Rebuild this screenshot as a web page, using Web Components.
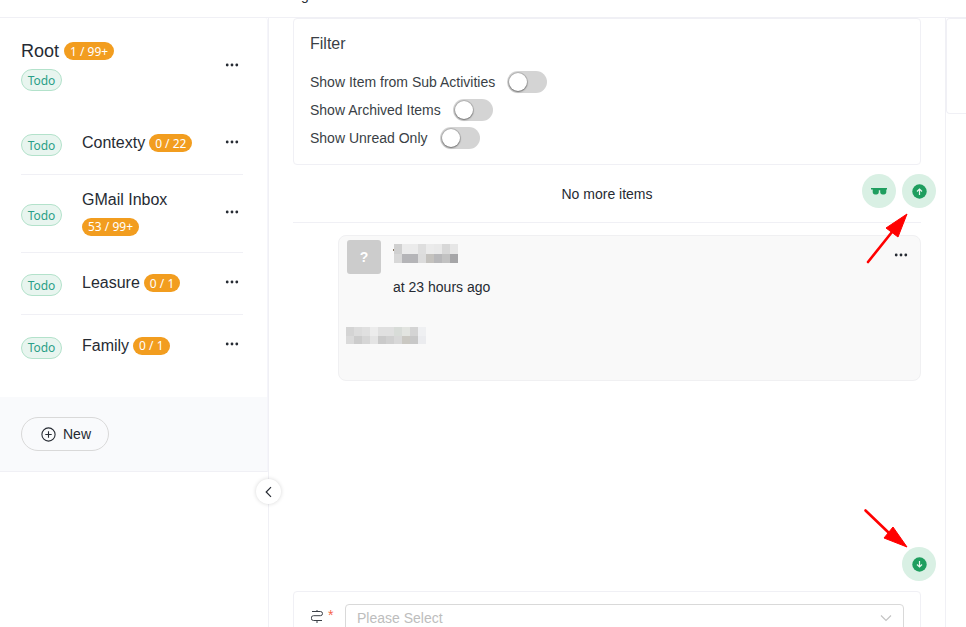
<!DOCTYPE html>
<html><head><meta charset="utf-8"><title>Activity</title>
<style>
html,body{margin:0;padding:0;height:627px;overflow:hidden;background:#fff;font-family:"Liberation Sans",Arial,sans-serif;color:#262b33}
</style></head><body>
<app-shell>
  <top-bar slot="top">g</top-bar>
  <side-panel slot="side">
    <todo-row root title-text="Root" badge="1 / 99+"></todo-row>
    <todo-row title-text="Contexty" badge="0 / 22" sep></todo-row>
    <todo-row wrap title-text="GMail Inbox" badge="53 / 99+" sep></todo-row>
    <todo-row title-text="Leasure" badge="0 / 1" sep></todo-row>
    <todo-row title-text="Family" badge="0 / 1"></todo-row>
  </side-panel>
  <main-pane slot="main">
    <filter-card>
      <toggle-row>Show Item from Sub Activities</toggle-row>
      <toggle-row>Show Archived Items</toggle-row>
      <toggle-row>Show Unread Only</toggle-row>
    </filter-card>
    <list-end>No more items</list-end>
    <message-card></message-card>
    <form-card></form-card>
  </main-pane>
  <right-card slot="right"></right-card>
</app-shell>
<script>
const def=(name,css,html,init)=>{customElements.define(name,class extends HTMLElement{
  connectedCallback(){ if(this.shadowRoot)return; const r=this.attachShadow({mode:'open'});
    r.innerHTML='<style>'+css+'</style>'+(typeof html==='function'?html(this):html); if(init)init(this,r);}
});};
const dots='<svg width="14" height="4" viewBox="0 0 14 4" fill="#262b33"><circle cx="2.2" cy="2" r="1.4"/><circle cx="7" cy="2" r="1.4"/><circle cx="11.8" cy="2" r="1.4"/></svg>';

def('more-dots',':host{display:flex;align-items:center;justify-content:center;width:14px;height:14px}svg{display:block}',dots);
def('status-tag',`:host{display:inline-flex;align-items:center;justify-content:center;box-sizing:border-box;width:41px;height:22px;border:1px solid #b3e2cb;border-radius:11px;background:#e8f5ef;color:#2b9f87;font:12px "Noto Sans",sans-serif;flex:none}`,'<slot>Todo</slot>');
def('count-badge',`:host{display:inline-flex;align-items:center;justify-content:center;box-sizing:border-box;height:18px;padding:0 6px;border-radius:9px;background:#f29d1f;color:#fff;font:12px "Noto Sans",sans-serif;white-space:nowrap;flex:none}`,'<slot></slot>');

def('app-shell',`:host{display:flex;flex-direction:column;width:966px;height:627px;overflow:hidden;position:relative}
.row{display:flex;flex:1;min-height:0}
.left{width:268px;flex:none;border-right:1px solid #f0f0f5;position:relative}
.mid{width:676px;flex:none;border-right:1px solid #f0f0f5;min-height:0}
.right{flex:1;min-width:0}
.collapse{position:absolute;right:-13px;top:461px;width:25px;height:25px;box-sizing:border-box;border-radius:50%;background:#fff;box-shadow:0 0 4px rgba(0,0,0,.16);display:flex;align-items:center;justify-content:center}
svg.ov{position:absolute;left:0;top:0;pointer-events:none}`,
`<slot name="top"></slot><div class="row"><div class="left"><slot name="side"></slot>
<div class="collapse"><svg width="12" height="12" viewBox="0 0 12 12" fill="none" stroke="#262b33" stroke-width="1.2"><path d="M8 1.2 3.2 6 8 10.8"/></svg></div></div>
<div class="mid"><slot name="main"></slot></div><div class="right"><slot name="right"></slot></div></div>
<svg class="ov" width="966" height="627" fill="#f00" stroke="#f00">
<path d="M868 262 892 232" stroke-width="2.6" stroke-linecap="round"/><path d="M907 214 886 228 898 237Z" stroke-width="1"/>
<path d="M865.500 510.500 889 533" stroke-width="2.600" stroke-linecap="round"/><path d="M907 547 884 538 893 527Z" stroke-width="1"/>
</svg>`);

def('top-bar',`:host{display:block;height:17px;border-bottom:1px solid #f0f0f5;overflow:hidden;background:#fff;font-size:14px;color:#262b33}
span{display:block;margin:-13px 0 0 301px;line-height:16px;height:16px}`,'<span><slot></slot></span>');

def('side-panel',`:host{display:flex;flex-direction:column;box-sizing:border-box;height:454px;border-right:1px solid #f5f5fa;border-bottom:1px solid #f0f0f5;border-top-right-radius:3px}
.list{flex:1;padding:0 24px 0 21px}
.foot{height:74px;flex:none;background:#f9fafc;display:flex;align-items:center;padding-left:21px;box-sizing:border-box}
.btn{display:flex;align-items:center;box-sizing:border-box;width:88px;height:34px;border:1px solid #d9d9d9;border-radius:17px;padding-left:19px;gap:7px;font-size:14px;color:#262b33}
svg{display:block}`,
`<div class="list"><slot></slot></div><div class="foot"><div class="btn"><svg width="15" height="15" viewBox="0 0 15 15" fill="none" stroke="#262b33" stroke-width="1.100"><circle cx="7.500" cy="7.500" r="6.600"/><path d="M7.500 4.300v6.400M4.300 7.500h6.400"/></svg>New</div></div>`);

def('todo-row',`:host{display:flex;align-items:center;box-sizing:border-box;height:62px;color:#262b33}
:host([root]){height:95px;padding-top:14px;align-items:flex-start}
:host([wrap]){height:78px}
:host([sep]){border-bottom:1px solid #f0f0f5}
.tag{width:61px;flex:none;display:flex;margin-top:3px}
.body{flex:1;display:flex;align-items:center;gap:4px;font-size:16px;line-height:22px;min-width:0;margin-top:-1px}
:host([wrap]) .body{flex-direction:column;align-items:flex-start;gap:7px;margin-top:-3px}
.dots{margin-right:4px;margin-top:-4px}
:host([wrap]) .dots{margin-top:-4px}
.rootbody{flex:1}
.rt{display:flex;align-items:center;gap:5px;font-size:18px;line-height:24px;margin-top:7px}
.rootbody status-tag{margin-top:6px}
:host([root]) .dots{margin-top:26px}`,
h=>h.hasAttribute('root')
?`<div class="rootbody"><div class="rt">${h.getAttribute('title-text')} <count-badge>${h.getAttribute('badge')}</count-badge></div><status-tag></status-tag></div><div class="dots"><more-dots></more-dots></div>`
:`<div class="tag"><status-tag></status-tag></div><div class="body"><span>${h.getAttribute('title-text')}</span><count-badge>${h.getAttribute('badge')}</count-badge></div><div class="dots"><more-dots></more-dots></div>`);

def('main-pane',`:host{display:flex;flex-direction:column;height:100%;padding:0 24px;box-sizing:border-box;overflow:visible;width:676px}`,'<slot></slot>');
def('filter-card',`:host{display:block;box-sizing:border-box;height:147px;border:1px solid #f0f0f5;border-radius:4px;padding:16px 16px 0;color:#3a3f46;flex:none}
h3{margin:0 0 15px;font-size:16px;font-weight:400;line-height:18px;color:#3a3f46}`,'<h3>Filter</h3><slot></slot>');
def('toggle-row',`:host{display:flex;align-items:center;gap:12px;height:28px;font-size:14px;color:#3a3f46}
.t{width:40px;height:22px;border-radius:11px;background:#d4d4d4;position:relative;flex:none}
.t::after{content:"";position:absolute;left:2px;top:2px;width:18px;height:18px;border-radius:50%;background:#fff;box-shadow:0 0 0 1px rgba(0,0,0,.14),0 1px 2px rgba(0,0,0,.4)}`,
'<span><slot></slot></span><div class="t"></div>');

def('round-btn',`:host{display:flex;align-items:center;justify-content:center;width:34px;height:34px;border-radius:50%;background:#d9f0e4}svg{display:block}`,
h=>h.getAttribute('kind')==='glasses'
?'<svg width="16" height="7" viewBox="0 0 16 7" fill="#1f9e5f"><path d="M0 0h16v1.500h-.7V4c0 1.500-.9 2.500-2.300 2.500h-1.500c-1.400 0-2.300-1-2.300-2.500V2.200H7.800V4c0 1.500-.9 2.500-2.300 2.500H4C2.600 6.500 1.700 5.500 1.700 4V1.500H0z"/></svg>'
:`<svg width="15" height="15" viewBox="0 0 15 15"><circle cx="7.500" cy="7.500" r="7.200" fill="#1f9e5f"/><path d="${h.getAttribute('kind')==='up'?'M7.500 11V6M5 7.500 7.500 5 10 7.500':'M7.500 4V9M5 7.500 7.500 10 10 7.500'}" fill="none" stroke="#e9f7f0" stroke-width="1.200"/></svg>`);
def('list-end',`:host{display:flex;align-items:center;justify-content:center;flex:none;height:57px;border-bottom:1px solid #f0f0f5;font-size:14px;color:#262b33;position:relative}
.b{position:absolute;right:-15px;top:9px;display:flex;gap:6px}`,
'<slot></slot><div class="b"><round-btn kind="glasses"></round-btn><round-btn kind="up"></round-btn></div>');

const px=(cols,cells,w,h)=>`<div style="display:grid;grid-template-columns:repeat(${cols},${w}px);grid-auto-rows:${h}px">`+cells.map(c=>`<i style="display:block;background:${c}"></i>`).join('')+'</div>';
def('message-card',`:host{display:block;flex:none;box-sizing:border-box;height:146px;margin:12px 0 0 45px;border:1px solid #f0f0f2;border-radius:8px;background:#f9f9f9;padding:4px 8px;position:relative}
.head{display:flex;gap:12px}
.av{width:34px;height:34px;border-radius:3px;background:#ccc;color:#fff;font-size:14px;font-weight:700;display:flex;align-items:center;justify-content:center;flex:none}
.n{padding-top:4px;padding-left:1px;position:relative}
.n::before{content:"";position:absolute;left:0;top:9px;width:1px;height:2px;background:#8a7a66}
.t{font-size:14px;color:#262b33;line-height:18px;margin:4px 0 0 46px}
.c{margin-top:31px;margin-left:-1px}
more-dots{position:absolute;right:12px;top:12px}`,
()=>`<div class="head"><div class="av">?</div><div class="n">${px(8,['#d0d0d0','#ebebeb','#ebebeb','#dedede','#ebebeb','#e9e9e9','#d8d8d8','#e6e6e6','#d8d8d8','#b5b5b8','#b5b5b8','#dcdcdc','#c4c2be','#b8b8ba','#c2c2c2','#a6a6a8'],8,9.500)}</div></div>
<div class="t">at 23 hours ago</div>
<div class="c">${px(10,['#d4d4d4','#dcdcdc','#e0e0e0','#ececec','#e0e0e0','#e0e0e0','#d8dcd8','#e2e4e0','#d4d4d4','#eff0f2','#dadada','#cccccc','#d6d6d6','#e4e4e4','#cacaca','#d0d0d0','#d8d8d8','#cac8c2','#c8c8c8','#ebecef'],8,8.500)}</div>
<more-dots></more-dots>`);

def('form-card',`:host{display:flex;flex:none;box-sizing:border-box;height:70px;margin-top:auto;margin-bottom:-34px;border:1px solid #f0f0f5;border-radius:4px;padding:12px 16px;align-items:flex-start;position:relative}
.i{display:flex;align-items:center;width:35px;flex:none;height:24px;gap:5px;padding-left:1px;box-sizing:border-box}
.s{color:#f5654a;font-size:14px;line-height:14px;margin-top:-2px}
.sel{flex:1;box-sizing:border-box;height:28px;border:1px solid #d9d9d9;border-radius:4px;display:flex;align-items:center;padding:0 11px;font-size:14px;color:#bdbdbd;justify-content:space-between}
svg{display:block}
.b{position:absolute;right:-16px;top:-45px}`,
`<div class="i"><svg width="12" height="13" viewBox="0 0 12 13" fill="none" stroke="#3a3f46" stroke-width="1"><path d="M6 0V1.500M6 10.500V13M1 1.500H9.400a2 2 0 0 1 0 4.200H2.600a2.400 2.400 0 0 0 0 4.800H11"/></svg><span class="s">*</span></div>
<div class="sel"><span>Please Select</span><svg width="12" height="8" viewBox="0 0 12 8" fill="none" stroke="#c4c4c4" stroke-width="1.200"><path d="M1 1.500 6 6.500 11 1.500"/></svg></div>
<div class="b"><round-btn kind="down"></round-btn></div>`);

def('right-card',`:host{display:block;box-sizing:border-box;height:96px;border:1px solid #f0f0f5;border-right:0;border-radius:4px 0 0 4px}`,'');
</script>
</body></html>
